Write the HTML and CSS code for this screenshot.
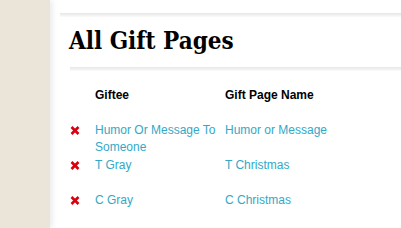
FILE: index.html
```html
<!DOCTYPE html>
<html>
<head>
  <title>All Gift Pages</title>
  <link rel="stylesheet" href="styles.css">
</head>
<body>
  <div class="sidebar"></div>

  <div class="main">
    <div class="shade top-shade"></div>
    <h1 class="page-title">All Gift Pages</h1>
    <div class="shade title-shade"></div>

    <div class="gift-list">
      <div class="cell"></div>
      <div class="cell head">Giftee</div>
      <div class="cell head">Gift Page Name</div>

      <div class="cell"><a class="remove" href="#"><svg width="10" height="9" viewBox="0 0 10 9"><path d="M1.5 1 L8.5 8 M8.5 1 L1.5 8" stroke="#d9000d" stroke-width="2.6"/></svg></a></div>
      <div class="cell wrap"><a href="#">Humor Or Message To Someone</a></div>
      <div class="cell"><a href="#">Humor or Message</a></div>

      <div class="cell"><a class="remove" href="#"><svg width="10" height="9" viewBox="0 0 10 9"><path d="M1.5 1 L8.5 8 M8.5 1 L1.5 8" stroke="#d9000d" stroke-width="2.6"/></svg></a></div>
      <div class="cell"><a href="#">T Gray</a></div>
      <div class="cell"><a href="#">T Christmas</a></div>

      <div class="cell"><a class="remove" href="#"><svg width="10" height="9" viewBox="0 0 10 9"><path d="M1.5 1 L8.5 8 M8.5 1 L1.5 8" stroke="#d9000d" stroke-width="2.6"/></svg></a></div>
      <div class="cell"><a href="#">C Gray</a></div>
      <div class="cell"><a href="#">C Christmas</a></div>
    </div>
  </div>
</body>
</html>
```

FILE: styles.css
```css
body {
  margin: 0;
  padding: 0;
  font-family: "Liberation Sans", Arial, sans-serif;
  font-size: 12px;
  background: #fff;
  display: flex;
  height: 228px;
  overflow: hidden;
}
.sidebar {
  width: 50px;
  flex: none;
  background: #ebe4d9;
  box-shadow: 2px 0 6px rgba(0, 0, 0, 0.09);
}
.main {
  flex: 1;
  padding-left: 10px;
  padding-top: 13px;
}
.shade {
  height: 4px;
  background: linear-gradient(#e6e6e6, #fbfbfb);
}
.page-title {
  margin: 0;
  padding: 9px 0 0 9px;
  height: 42px;
  box-sizing: border-box;
  font-family: "DejaVu Serif", serif;
  font-stretch: condensed;
  font-size: 24px;
  line-height: 30px;
  font-weight: bold;
  color: #000;
}
.title-shade {
  margin-left: 10px;
  margin-top: 8px;
}
.gift-list {
  margin: 16px 0 0 10px;
  display: grid;
  grid-template-columns: 25px 130px 1fr;
  grid-auto-rows: 35px;
  align-items: start;
  line-height: 17px;
}
.cell {
  padding-right: 5px;
}
.head {
  font-weight: bold;
  color: #000;
}
.gift-list a {
  color: #33a8c6;
  text-decoration: none;
}
.remove svg {
  display: block;
  margin-top: 4px;
}
```
